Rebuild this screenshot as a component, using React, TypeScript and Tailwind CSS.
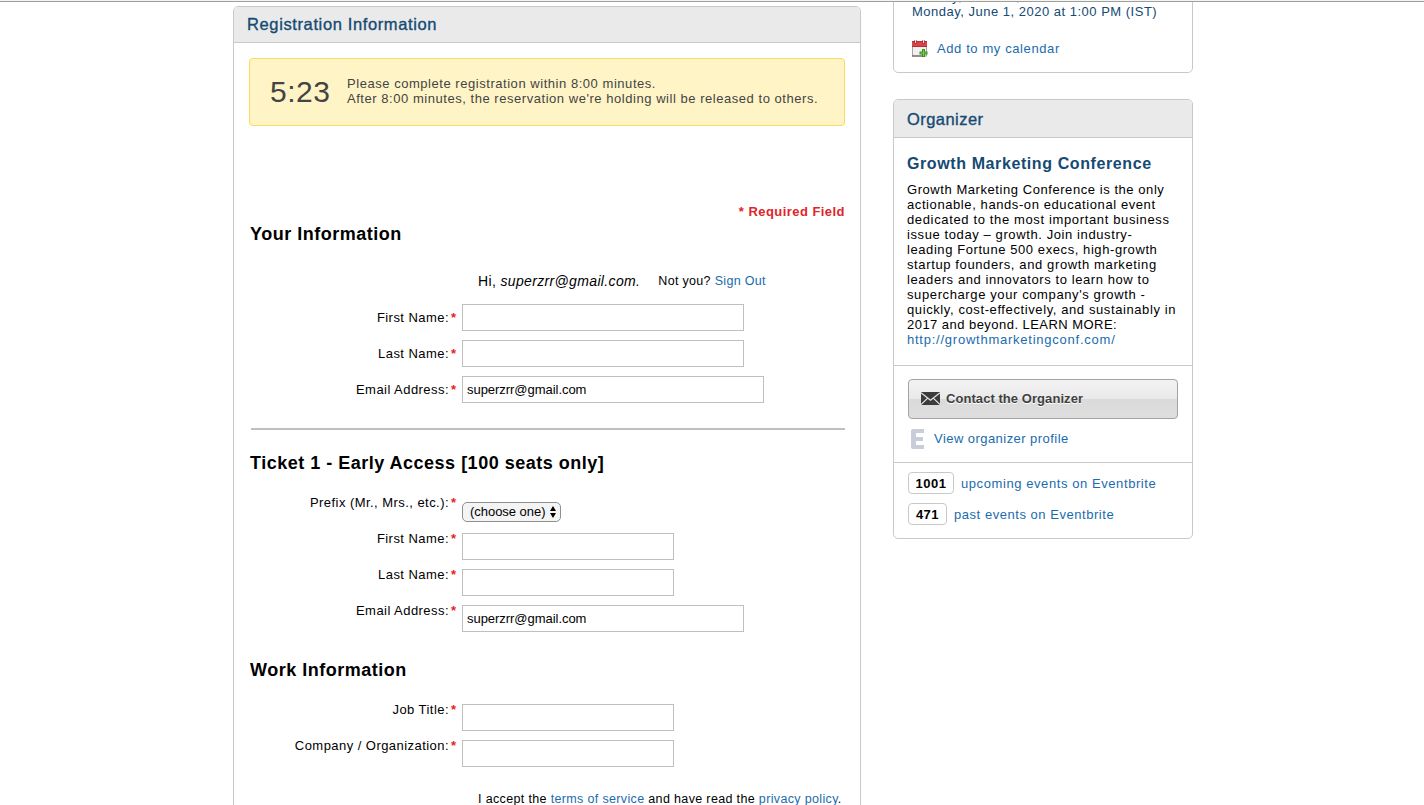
import React from "react";

const link = "text-[#1a6bae]";

function Label({ text }: { text: string }) {
  return (
    <div className="flex h-[15px] w-[208px] shrink-0 justify-end gap-[2px] whitespace-nowrap text-[13px] leading-[15px]">
      <span className="tracking-[0.45px]">{text}</span>
      <span className="w-[6px] font-bold text-[#e61e22]">*</span>
    </div>
  );
}

function Row({ label, width, value, centered }: { label: string; width: string; value?: string; centered?: boolean }) {
  return (
    <div className="flex h-9 items-start">
      <div className={centered ? "pt-[6px]" : ""}>
        <Label text={label} />
      </div>
      <input
        defaultValue={value}
        className={`ml-[5px] h-[27px] border border-[#bfbfbf] bg-white px-[4px] text-[13px] tracking-[-0.04px] outline-none ${centered ? "" : "mt-[2px]"} ${width}`}
      />
    </div>
  );
}

function Heading({ children, className }: { children: React.ReactNode; className: string }) {
  return (
    <h2 className={`h-[22px] whitespace-nowrap pl-px text-[18px] font-bold leading-[22px] tracking-[0.5px] ${className}`}>{children}</h2>
  );
}

function Calendar() {
  return (
    <svg width="16" height="17" viewBox="0 0 16 17" className="shrink-0">
      <rect x="0.5" y="1.5" width="14" height="14.5" fill="#eef1f1" stroke="#a5a5a5" />
      <rect x="0" y="1" width="15" height="6" fill="#d9434a" />
      <path d="M0 1.5h15M0 6.5h15" stroke="#bb2e35" />
      <path d="M3.5 0v3.5M11.5 0v3.5" stroke="#7d2a2d" strokeWidth="2" />
      <path d="M3.5 0v3M11.5 0v3" stroke="#f3dcdc" strokeWidth="1" />
      <path d="M0 16h10" stroke="#6d4444" />
      <path d="M10 9h3v2.500h2.500v3H13V17h-3v-2.500H7.500v-3H10z" fill="#3d8f22" />
      <path d="M11.500 10v6M8.500 13h6" stroke="#7ccb4c" />
    </svg>
  );
}

function Envelope() {
  return (
    <svg width="19" height="13" viewBox="0 0 19 13" className="mb-[2px] shrink-0">
      <rect width="19" height="13" fill="#3b3b3b" />
      <path d="M0 .8 9.500 8.200 19 .8M0 12.500 6.700 6.200M19 12.500 12.300 6.200" fill="none" stroke="#e8e8e8" strokeWidth="1.100" />
    </svg>
  );
}

const about: [string, string][] = [
  ["Growth Marketing Conference is the only", "tracking-[0.56px]"],
  ["actionable, hands-on educational event", "tracking-[0.59px]"],
  ["dedicated to the most important business", "tracking-[0.64px]"],
  ["issue today – growth. Join industry-", "tracking-[0.6px]"],
  ["leading Fortune 500 execs, high-growth", "tracking-[0.58px]"],
  ["startup founders, and growth marketing", "tracking-[0.62px]"],
  ["leaders and innovators to learn how to", "tracking-[0.58px]"],
  ["supercharge your company's growth -", "tracking-[0.61px]"],
  ["quickly, cost-effectively, and sustainably in", "tracking-[0.6px]"],
  ["2017 and beyond. LEARN MORE:", "tracking-[0.46px]"],
];

export default function App() {
  return (
    <div className="h-[805px] w-[1424px] overflow-hidden bg-white font-['Liberation_Sans',Arial,sans-serif] text-[13px] text-black">
      <div className="h-[2px] border-b border-[#9c9f9c] bg-[#f4f5f3]" />
      <div className="flex h-[803px] items-start gap-8 overflow-hidden pl-[233px]">
        <main className="mt-1 h-[830px] w-[628px] shrink-0 rounded-t-[5px] border border-[#c9c9c9]">
          <h1 className="h-9 rounded-t-[4px] border-b border-[#c9c9c9] bg-[#eaeaea] pl-[13px] text-[16.5px] leading-[35px] tracking-[0.62px] text-[#154a73] [-webkit-text-stroke:0.35px_#154a73]">
            Registration Information
          </h1>
          <div className="px-[15px] pt-[15px]">
            <div className="flex h-[68px] items-start rounded-[4px] border border-[#fbdb5b] bg-[#fef4c6] text-[#444]">
              <div className="ml-5 mt-[14px] w-[77px] whitespace-nowrap text-[30px] leading-[38px] tracking-[0.5px]">5:23</div>
              <p className="mt-[17px] whitespace-nowrap leading-[15px] tracking-[0.54px]">
                Please complete registration within 8:00 minutes.
                <br />
                After 8:00 minutes, the reservation we're holding will be released to others.
              </p>
            </div>
            <div className="mt-[78px] h-[15px] text-right font-bold leading-[15px] tracking-[0.45px] text-[#e0242b]">* Required Field</div>
            <Heading className="mt-1">Your Information</Heading>
            <div className="mt-[27px] flex h-[18px] items-center whitespace-nowrap pl-[229px] leading-[18px]">
              <span className="text-[14px] tracking-[0.35px]">Hi,&nbsp;<i>superzrr@gmail.com.</i></span>
              <span className="ml-[18px] text-[12.5px] tracking-[0.32px]">
                Not you? <a className={link}>Sign Out</a>
              </span>
            </div>
            <div className="mt-[14px] h-[99px]">
              <Row label="First Name:" width="w-[282px]" centered />
              <Row label="Last Name:" width="w-[282px]" centered />
              <Row label="Email Address:" width="w-[302px]" value="superzrr@gmail.com" centered />
            </div>
            <div className="ml-[2px] mt-[25px] h-[2px] bg-[#bfbfbf]" />
            <Heading className="mt-[22px]">Ticket 1 - Early Access [100 seats only]</Heading>
            <div className="mt-[21px] h-[137px]">
              <div className="flex h-9 items-start">
                <Label text="Prefix (Mr., Mrs., etc.):" />
                <button className="ml-[5px] mt-[7px] flex h-5 w-[99px] items-center justify-between whitespace-nowrap rounded-[5px] border border-[#8f8f8f] bg-[#f4f4f4] pl-[7px] pr-[4px] leading-[15px]">
                  <span className="pb-[2px] tracking-[-0.03px]">(choose one)</span>
                  <svg width="6" height="12" viewBox="0 0 6 12">
                    <path d="M3 0 6 5H0zM3 12 0 7h6z" />
                  </svg>
                </button>
              </div>
              <Row label="First Name:" width="w-[212px]" />
              <Row label="Last Name:" width="w-[212px]" />
              <Row label="Email Address:" width="w-[282px]" value="superzrr@gmail.com" />
            </div>
            <Heading className="mt-[27px]">Work Information</Heading>
            <div className="mt-[21px] h-[65px]">
              <Row label="Job Title:" width="w-[212px]" />
              <Row label="Company / Organization:" width="w-[212px]" />
            </div>
            <p className="mt-[25px] whitespace-nowrap pl-[229px] text-[12.5px] leading-[15px] tracking-[0.35px]">
              I accept the <a className={link}>terms of service</a> and have read the <a className={link}>privacy policy</a>.
            </p>
          </div>
        </main>

        <aside className="w-[300px] shrink-0">
          <section className="-mt-[14px] h-[85px] rounded-[5px] border border-[#c9c9c9] pl-[18px] text-[#154a73]">
            <p className="h-[30px] whitespace-nowrap leading-[15px] tracking-[0.5px]">
              Sunday, June 14, 2020 at 9:00 AM -
              <br />
              Monday, June 1, 2020 at 1:00 PM (IST)
            </p>
            <div className="mt-[21px] flex h-[17px] items-center gap-[9px]">
              <Calendar />
              <a className={`${link} tracking-[0.6px]`}>Add to my calendar</a>
            </div>
          </section>
          <section className="mt-[26px] h-[440px] rounded-[5px] border border-[#c9c9c9]">
            <h2 className="h-[38px] rounded-t-[4px] border-b border-[#c9c9c9] bg-[#eaeaea] pl-[13px] text-[16.5px] leading-[39px] tracking-[0.45px] text-[#154a73] [-webkit-text-stroke:0.35px_#154a73]">
              Organizer
            </h2>
            <div className="h-[228px] border-b border-[#c9c9c9] pl-[13px] pt-[15px]">
              <h3 className="h-[22px] whitespace-nowrap text-[16px] font-bold leading-[22px] tracking-[0.6px] text-[#154a73]">Growth Marketing Conference</h3>
              <p className="mt-[7px] whitespace-nowrap leading-[15px]">
                {about.map(([text, spacing]) => (
                  <span key={text} className={`block ${spacing}`}>{text}</span>
                ))}
                <a className={`block tracking-[0.76px] ${link}`}>http://growthmarketingconf.com/</a>
              </p>
            </div>
            <div className="h-[97px] border-b border-[#c9c9c9] px-[14px] pt-[13px]">
              <button className="flex h-10 w-[270px] items-center gap-[6px] rounded-[4px] border border-[#a3a3a3] bg-[linear-gradient(#f2f2f2_0%,#eaeaea_50%,#dadada_50%,#dedede_100%)] pl-[12px] font-bold tracking-[0.06px] text-[#3f3f3f] [text-shadow:0_1px_0_#fff]">
                <Envelope />
                Contact the Organizer
              </button>
              <div className="mt-[10px] flex h-5 items-center pl-[3px]">
                <svg width="13" height="20" viewBox="0 0 13 20">
                  <path d="M2 0h11v4H5v4h7v4H5v4h8v4H2Q0 20 0 18V2Q0 0 2 0z" fill="#c9ccd9" />
                </svg>
                <a className={`ml-[10px] ${link} tracking-[0.45px]`}>View organizer profile</a>
              </div>
            </div>
            <div className="flex flex-col gap-[9px] px-[14px] pt-[9px]">
              <div className="flex h-[22px] items-center gap-[7px] whitespace-nowrap">
                <b className="h-[22px] w-[46px] rounded-[4px] border border-[#c9c9c9] text-center leading-[21px] tracking-[0.5px]">1001</b>
                <a className={`${link} pt-[2px] tracking-[0.58px]`}>upcoming events on Eventbrite</a>
              </div>
              <div className="flex h-[22px] items-center gap-[7px] whitespace-nowrap">
                <b className="h-[22px] w-[39px] rounded-[4px] border border-[#c9c9c9] text-center leading-[21px] tracking-[0.5px]">471</b>
                <a className={`${link} pt-[2px] tracking-[0.54px]`}>past events on Eventbrite</a>
              </div>
            </div>
          </section>
        </aside>
      </div>
    </div>
  );
}
